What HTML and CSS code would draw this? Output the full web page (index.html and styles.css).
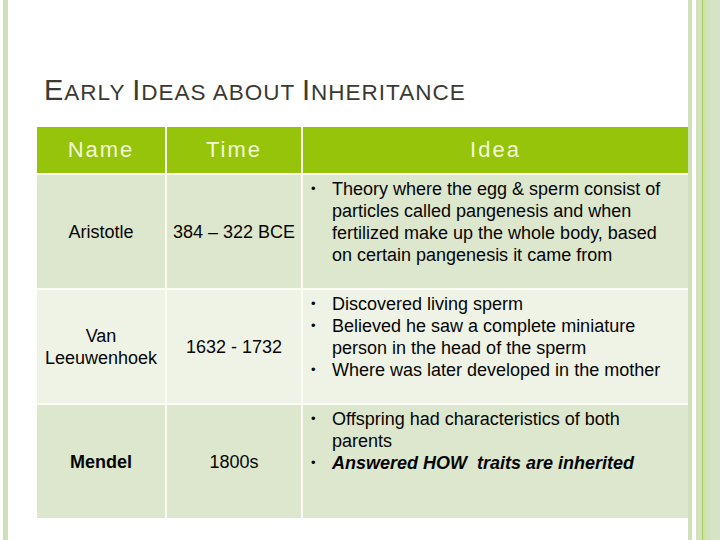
FILE: index.html
```html
<!DOCTYPE html>
<html>
<head>
<meta charset="utf-8">
<link rel="stylesheet" href="styles.css">
</head>
<body>
<div class="slide">
  <div class="edge-left"></div>
  <main class="content">
    <h1 class="title"><span class="cap">E</span>ARLY <span class="cap">I</span>DEAS ABOUT <span class="cap">I</span>NHERITANCE</h1>
    <div class="table">
      <div class="th">Name</div>
      <div class="th">Time</div>
      <div class="th">Idea</div>

      <div class="td c odd">Aristotle</div>
      <div class="td c odd">384 – 322 BCE</div>
      <div class="td idea odd">
        <ul>
          <li>Theory where the egg &amp; sperm consist of particles called pangenesis and when fertilized make up the whole body, based on certain pangenesis it came from</li>
        </ul>
      </div>

      <div class="td c even">Van Leeuwenhoek</div>
      <div class="td c even">1632 - 1732</div>
      <div class="td idea even">
        <ul>
          <li>Discovered living sperm</li>
          <li>Believed he saw a complete miniature person in the head of the sperm</li>
          <li>Where was later developed in the mother</li>
        </ul>
      </div>

      <div class="td c odd bold">Mendel</div>
      <div class="td c odd">1800s</div>
      <div class="td idea odd">
        <ul>
          <li>Offspring had characteristics of both parents</li>
          <li><b><i>Answered HOW&nbsp; traits are inherited</i></b></li>
        </ul>
      </div>
    </div>
  </main>
  <div class="edge-right-bar"></div>
  <div class="edge-right-gap"></div>
  <div class="edge-right-stripes"></div>
</div>
</body>
</html>
```

FILE: styles.css
```css
html, body {
  margin: 0;
  padding: 0;
  background: #ffffff;
}

.slide {
  width: 720px;
  height: 540px;
  display: flex;
  background: #ffffff;
  font-family: "Liberation Sans", Arial, sans-serif;
  overflow: hidden;
}

.edge-left {
  width: 5px;
  margin-left: 3px;
  background: #cfe0b9;
  flex: none;
}

.content {
  width: 680px;
  flex: none;
  display: flex;
  flex-direction: column;
}

.title {
  margin: 73px 0 17px 36px;
  font-weight: normal;
  font-size: 22.5px;
  line-height: 34px;
  color: #3a3a32;
  letter-spacing: 1px;
  white-space: nowrap;
}

.title .cap {
  font-size: 29px;
}

.table {
  margin-left: 29px;
  width: 651px;
  display: grid;
  grid-template-columns: 128px 134px 385px;
  grid-template-rows: 46px 113px 113px 113px;
  gap: 2px;
  background: #fbfdf4;
}

.th {
  background: #95c40a;
  color: #f3f9d6;
  font-size: 22px;
  letter-spacing: 2px;
  display: flex;
  align-items: center;
  justify-content: center;
}

.td {
  font-size: 18px;
  line-height: 22px;
  color: #050505;
}

.td.odd {
  background: #dde7cd;
}

.td.even {
  background: #eef3e6;
}

.td.c {
  display: flex;
  align-items: center;
  justify-content: center;
  text-align: center;
  padding: 0 4px;
}

.td.bold {
  font-weight: bold;
}

.td.idea {
  padding: 3px 16px 0 0;
}

.td.idea ul {
  list-style: none;
  margin: 0;
  padding: 0;
}

.td.idea li {
  position: relative;
  padding-left: 29px;
}

.td.idea li::before {
  content: "•";
  position: absolute;
  left: 8px;
  top: 0;
  font-size: 13px;
  font-weight: normal;
  font-style: normal;
}

.edge-right-bar {
  width: 4px;
  flex: none;
  background: #d0e0b9;
}

.edge-right-gap {
  width: 4px;
  flex: none;
  background: #ffffff;
}

.edge-right-stripes {
  width: 24px;
  flex: none;
  background: linear-gradient(to right,
    #d3e2bf 0, #d3e2bf 6px,
    #a9c862 6px, #a9c862 7.5px,
    #cfe49f 7.5px, #cfe49f 10px,
    #d2e2bc 10px, #d2e2bc 14px,
    #d6e4c5 14px, #d6e4c5 24px);
}
```
